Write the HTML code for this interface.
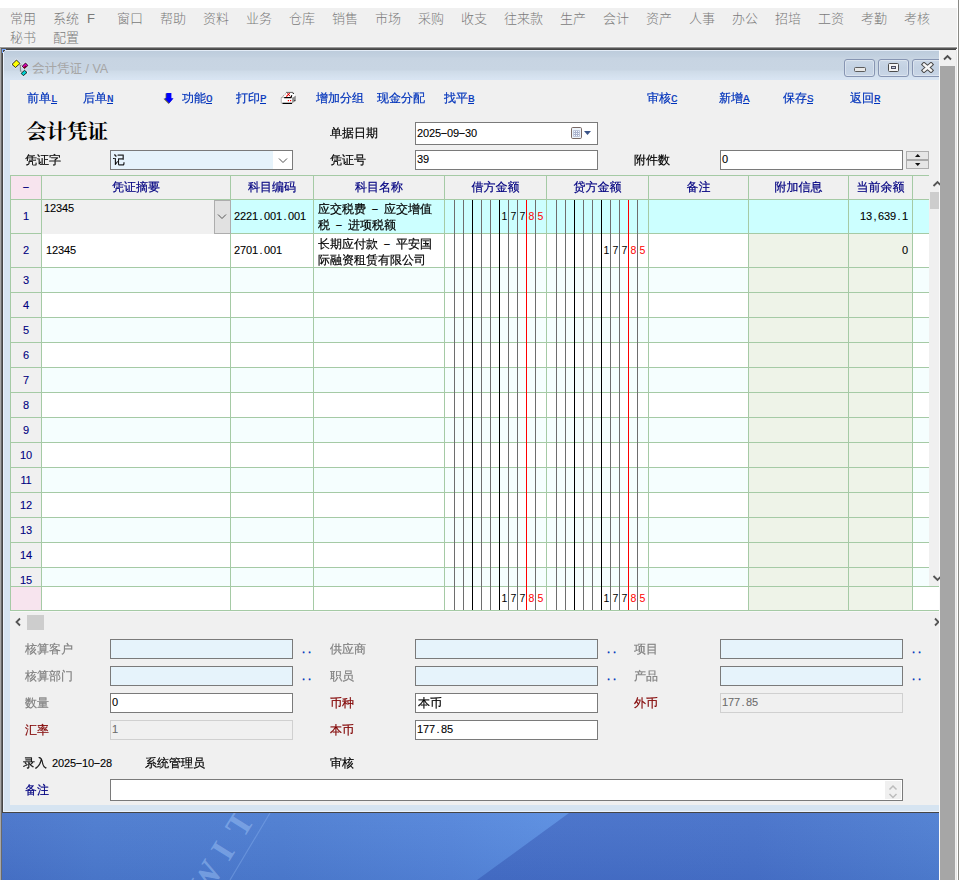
<!DOCTYPE html>
<html><head><meta charset="utf-8"><title>会计凭证 / VA</title>
<style>
html,body{margin:0;padding:0;}
body{width:959px;height:880px;position:relative;overflow:hidden;background:#fff;
 font-family:"Liberation Sans","WenQuanYi Zen Hei",sans-serif;font-size:12px;line-height:14px;color:#000;-webkit-text-stroke:0.2px;}
div,span,svg{position:absolute;box-sizing:border-box;white-space:nowrap;}
.m,u{font-family:"Liberation Sans","WenQuanYi Zen Hei",sans-serif;font-size:11px;letter-spacing:-0.12px;}
.m{-webkit-text-stroke:0.1px;}
.m i{display:inline-block;width:6px;font-style:normal;text-align:center;letter-spacing:0;}
u{font-family:"Liberation Mono",monospace;letter-spacing:-0.6px;display:inline-block;width:6px;font-size:11px;}
.menu span{-webkit-text-stroke:0;font-family:"Liberation Sans","Noto Sans CJK SC",sans-serif;font-size:13px;line-height:16px;color:#7a7a7a;font-weight:300;}
.lnk{color:#0033bb;height:14px;}
.lbl{height:14px;}
.g{color:#808080;} .r{color:#800000;} .n{color:#000080;}
.inp{border:1px solid #7a7a7a;background:#fff;}
.inp.b{background:#e6f3fb;}
.inp.d{background:#f0f0f0;border-color:#d0d0d0;color:#6d6d6d;}
.inp span{left:2px;top:2px;}
.hd{color:#000080;text-align:center;top:180px;height:14px;}
.rn{color:#000080;text-align:center;left:11px;width:30px;height:14px;}
.dots{color:#0033bb;-webkit-text-stroke:0.5px #0033bb;}
.dots i{text-align:left;}
i.w{transform:scaleX(2) translateY(-1.5px);}
.c{height:14px;}
.dg{width:9px;text-align:center;height:14px;font-family:"Liberation Sans",sans-serif;font-size:10.5px;-webkit-text-stroke:0;}
</style></head><body>

<div class="menu" style="left:0;top:8px;width:957px;height:39px;background:#f0f0f0;">
<span style="left:10px;top:3px;">常用</span>
<span style="left:53px;top:3px;">系统</span>
<span style="left:87px;top:3px;">F</span>
<span style="left:117px;top:3px;">窗口</span>
<span style="left:160px;top:3px;">帮助</span>
<span style="left:203px;top:3px;">资料</span>
<span style="left:246px;top:3px;">业务</span>
<span style="left:289px;top:3px;">仓库</span>
<span style="left:332px;top:3px;">销售</span>
<span style="left:375px;top:3px;">市场</span>
<span style="left:418px;top:3px;">采购</span>
<span style="left:461px;top:3px;">收支</span>
<span style="left:504px;top:3px;">往来款</span>
<span style="left:560px;top:3px;">生产</span>
<span style="left:603px;top:3px;">会计</span>
<span style="left:646px;top:3px;">资产</span>
<span style="left:689px;top:3px;">人事</span>
<span style="left:732px;top:3px;">办公</span>
<span style="left:775px;top:3px;">招培</span>
<span style="left:818px;top:3px;">工资</span>
<span style="left:861px;top:3px;">考勤</span>
<span style="left:904px;top:3px;">考核</span>
<span style="left:10px;top:22px;">秘书</span><span style="left:53px;top:22px;">配置</span>
</div>
<svg style="left:0;top:813px;" width="939" height="67" viewBox="0 813 939 67">
<defs>
<linearGradient id="bg1" x1="0" x2="1" y1="0" y2="0"><stop offset="0" stop-color="#4874ca"/><stop offset="0.1" stop-color="#4c7bcf"/><stop offset="0.3" stop-color="#4d7dd1"/><stop offset="0.48" stop-color="#5485da"/><stop offset="0.6" stop-color="#5a8ee1"/></linearGradient>
<linearGradient id="bg2" x1="0" x2="1" y1="0" y2="0"><stop offset="0" stop-color="#456fc8"/><stop offset="0.6" stop-color="#4772ca"/><stop offset="1" stop-color="#4f7fd2"/></linearGradient>
<linearGradient id="bg3" x1="0" x2="0" y1="0" y2="1"><stop offset="0" stop-color="#ffffff" stop-opacity="0.04"/><stop offset="1" stop-color="#000040" stop-opacity="0.05"/></linearGradient>
</defs>
<rect x="0" y="813" width="939" height="67" fill="url(#bg1)"/>
<polygon points="569,813 939,813 939,880 477,880" fill="url(#bg2)"/>
<rect x="0" y="813" width="939" height="67" fill="url(#bg3)"/>
<path d="M270 813L230 880" stroke="#86aeea" stroke-opacity="0.45" stroke-width="1.2"/>
<text transform="translate(211.8,889.5) rotate(-58)" x="-10.4 32 59.3" font-family="Liberation Serif, serif" font-weight="bold" font-size="34" fill="#93b9f0" fill-opacity="0.58">WIT</text>
</svg>
<div style="left:0;top:47px;width:1px;height:833px;background:#a8a8a8;"></div>
<div style="left:1px;top:48px;width:1px;height:832px;background:#6a6a6a;"></div>
<div style="left:2px;top:49px;width:937px;height:764px;background:#d6e4f1;"></div>
<div style="left:0;top:46px;width:957px;height:1px;background:#f7f7f7;"></div>
<div style="left:0;top:47px;width:957px;height:1px;background:#9a9a9a;"></div>
<div style="left:1px;top:48px;width:956px;height:1px;background:#565656;"></div>
<div style="left:2px;top:49px;width:954px;height:1px;background:#454545;"></div>
<div style="left:2px;top:49px;width:1px;height:764px;background:#454545;"></div>
<div style="left:3px;top:50px;width:1px;height:762px;background:#eaf1fb;"></div>
<div style="left:3px;top:50px;width:936px;height:1px;background:#e3ecf7;"></div>
<div style="left:4px;top:51px;width:935px;height:29px;background:linear-gradient(#bdccdc 0px,#c3d1e0 6px,#c7d4e2 7px,#c8d5e3 19px,#cedbe8 20px,#d8e4f2 28px);"></div>
<div style="left:3px;top:811px;width:936px;height:1px;background:#eaf1fb;"></div>
<div style="left:2px;top:812px;width:937px;height:1px;background:#454545;"></div>
<div style="left:2px;top:49px;width:4px;height:1px;background:#7aaaff;"></div><div style="left:2px;top:50px;width:2px;height:1px;background:#7aaaff;"></div><div style="left:2px;top:51px;width:1px;height:2px;background:#7aaaff;"></div><div style="left:3px;top:50px;width:2px;height:1px;background:#4a4a4a;"></div><div style="left:3px;top:51px;width:1px;height:1px;background:#4a4a4a;"></div>
<div style="left:10px;top:80px;width:929px;height:725px;background:#f0f0f0;"></div>
<svg style="left:10px;top:58px;" width="20" height="20" viewBox="10 58 20 20">
<path d="M19.5 65.2H22.5M20.4 65.2V71.3H22.5" stroke="#808080" stroke-width="1" fill="none"/>
<polygon points="16.5,60 20,63.5 15.5,67.5 12,64.4" fill="#ffff00" stroke="#fff" stroke-width="2.2" stroke-opacity="0.6"/><polygon points="16.5,60 20,63.5 15.5,67.5 12,64.4" fill="#ffff00" stroke="#101020" stroke-width="0.9"/>
<polygon points="25.5,63 27.9,65.5 24.5,68.6 22.2,66.3" fill="#e000c0" stroke="#fff" stroke-width="2.2" stroke-opacity="0.6"/><polygon points="25.5,63 27.9,65.5 24.5,68.6 22.2,66.3" fill="#e000c0" stroke="#101010" stroke-width="0.9"/><polygon points="26.7,66.6 24.5,68.6 23.3,67.4 25.6,65.4" fill="#800020"/>
<polygon points="24.5,70.3 27,72.5 23.4,75.7 21.1,73.4" fill="#00c8c8" stroke="#fff" stroke-width="2.2" stroke-opacity="0.6"/><polygon points="24.5,70.3 27,72.5 23.4,75.7 21.1,73.4" fill="#00d0d0" stroke="#101010" stroke-width="0.9"/>
</svg>
<div style="left:32px;top:61px;font-family:'Liberation Sans','Noto Sans CJK SC',sans-serif;font-size:12.5px;-webkit-text-stroke:0;line-height:16px;color:#a6a6a6;">会计凭证 / VA</div>
<div style="left:844px;top:59px;width:31px;height:18px;border:1px solid #8795b2;border-radius:3px;background:linear-gradient(#cbd8e7,#c3d1e2 50%,#c9d6e6);box-shadow:inset 0 0 0 1px rgba(255,255,255,0.35);"></div>
<div style="left:878px;top:59px;width:31px;height:18px;border:1px solid #8795b2;border-radius:3px;background:linear-gradient(#cbd8e7,#c3d1e2 50%,#c9d6e6);box-shadow:inset 0 0 0 1px rgba(255,255,255,0.35);"></div>
<div style="left:912px;top:59px;width:31px;height:18px;border:1px solid #8795b2;border-radius:3px;background:linear-gradient(#cbd8e7,#c3d1e2 50%,#c9d6e6);box-shadow:inset 0 0 0 1px rgba(255,255,255,0.35);"></div>
<div style="left:854px;top:67px;width:12px;height:5px;border:1px solid #5c5c5c;border-radius:1.5px;background:#e8e8e8;"></div>
<div style="left:888px;top:63px;width:11px;height:9px;border:1px solid #4c4c4c;border-radius:1.5px;background:#f4f4f4;"></div>
<div style="left:891px;top:66px;width:5px;height:3px;border:1px solid #4c4c5c;background:#c8d0e0;"></div>
<svg style="left:921px;top:62px;" width="13" height="11" viewBox="0 0 13 11"><path d="M3 2.5L10 8.5M10 2.5L3 8.5" stroke="#4a4a4a" stroke-width="4.4" stroke-linecap="square"/><path d="M3 2.5L10 8.5M10 2.5L3 8.5" stroke="#f6f6f6" stroke-width="2.4" stroke-linecap="square"/></svg>
<div style="left:939px;top:50px;width:18px;height:830px;background:#f0f0f0;"></div>
<div style="left:939px;top:50px;width:1px;height:830px;background:#fafafa;"></div>
<div style="left:940px;top:66px;width:15px;height:814px;background:#a6a6a6;"></div>
<svg style="left:943px;top:54px;" width="9" height="7" viewBox="0 0 9 7"><path d="M1 5.5L4.5 2L8 5.5" stroke="#505050" stroke-width="1.8" fill="none"/></svg>
<div style="left:955px;top:50px;width:2px;height:830px;background:linear-gradient(90deg,#f0f0f0 50%,#e6e6e6 50%);"></div>
<div style="left:957px;top:0;width:1px;height:880px;background:#fff;"></div>
<div style="left:958px;top:0;width:1px;height:880px;background:#8a8a86;"></div>
<div class="lnk" style="left:27px;top:91px;">前单<u>L</u></div>
<div class="lnk" style="left:83px;top:91px;">后单<u>N</u></div>
<div class="lnk" style="left:182px;top:91px;">功能<u>O</u></div>
<div class="lnk" style="left:236px;top:91px;">打印<u>P</u></div>
<div class="lnk" style="left:316px;top:91px;">增加分组</div>
<div class="lnk" style="left:377px;top:91px;">现金分配</div>
<div class="lnk" style="left:444px;top:91px;">找平<u>B</u></div>
<div class="lnk" style="left:647px;top:91px;">审核<u>C</u></div>
<div class="lnk" style="left:719px;top:91px;">新增<u>A</u></div>
<div class="lnk" style="left:783px;top:91px;">保存<u>S</u></div>
<div class="lnk" style="left:850px;top:91px;">返回<u>R</u></div>
<svg style="left:162px;top:91px;" width="14" height="14" viewBox="162 91 14 14">
<polygon points="165.6,93.6 170.6,93.6 170.6,98.8 172.8,98.8 168.6,103.9 163.4,98.8 165.6,98.8" fill="#6b6b3a"/>
<polygon points="166.4,93 171.4,93 171.4,98.2 173.6,98.2 169.3,103.2 164.2,98.2 166.4,98.2" fill="#0000ff"/>
</svg>
<svg style="left:280px;top:90px;" width="17" height="15" viewBox="280 90 17 15">
<polygon points="281.3,98 286,92.6 293.2,92.6 295.8,95.6 292.3,98" fill="#fff"/>
<path d="M286 92.4H293" stroke="#555" stroke-width="0.9"/>
<path d="M281.6 97.6L285.8 93.6" stroke="#707070" stroke-width="1" stroke-dasharray="1.3 0.9"/>
<path d="M281.4 97.6V102.6" stroke="#9a9a9a" stroke-width="0.9"/>
<rect x="281.2" y="97.7" width="11.1" height="5.4" fill="#fff" stroke="#a0a0a0" stroke-width="0.6"/>
<polygon points="292.3,98 295.8,95.6 295.8,100.6 292.3,103.2" fill="#8e8e8e"/>
<path d="M282.5 103.4H292" stroke="#000" stroke-width="1.2"/>
<path d="M284.2 97.6H291L291.8 95.3" stroke="#000" stroke-width="1.1" fill="none"/>
<path d="M286.3 96.7L289.7 93.2" stroke="#ff0000" stroke-width="1.1"/>
<path d="M287.3 93.3L290.3 96.4" stroke="#a00000" stroke-width="0.9"/>
<rect x="287.8" y="100" width="1.2" height="1.2" fill="#ff0000"/><rect x="290" y="100" width="1.2" height="1.2" fill="#ff0000"/>
<rect x="292.8" y="92.8" width="1" height="1.2" fill="#000"/><rect x="294.3" y="100" width="1" height="1.2" fill="#222"/>
</svg>
<div style="left:26px;top:120px;font-family:'Liberation Serif','Noto Serif CJK SC',serif;font-weight:700;font-size:20.5px;-webkit-text-stroke:0;line-height:24px;">会计凭证</div>
<div class="lbl " style="left:330px;top:126px;">单据日期</div>
<div class="lbl " style="left:25px;top:153px;">凭证字</div>
<div class="lbl " style="left:330px;top:153px;">凭证号</div>
<div class="lbl " style="left:634px;top:153px;">附件数</div>
<div class="inp " style="left:415px;top:122px;width:183px;height:23px;"><span class="m" style="top:3px;left:1px">2025<i class="w">-</i>09<i class="w">-</i>30</span></div>
<div class="inp b" style="left:110px;top:150px;width:183px;height:20px;"><span style="top:2px">记</span></div>
<div class="inp " style="left:415px;top:150px;width:183px;height:20px;"><span class="m" style="top:1px;left:1px">39</span></div>
<div class="inp " style="left:720px;top:150px;width:183px;height:20px;"><span class="m" style="top:1px;left:1px">0</span></div>
<div style="left:273px;top:151px;width:19px;height:18px;background:#fff;"></div>
<svg style="left:278px;top:157px;" width="10" height="7" viewBox="0 0 10 7"><path d="M1 1.5L5 5.5L9 1.5" stroke="#505050" stroke-width="1" fill="none"/></svg>
<svg style="left:570px;top:126px;" width="22" height="14" viewBox="570 126 22 14">
<rect x="571.5" y="127.5" width="10" height="11" rx="1.2" fill="#eef4fb" stroke="#7a6a66" stroke-width="1"/>
<rect x="573.3" y="130.3" width="6.4" height="6.4" fill="#aab2cc"/>
<g fill="#f4f8ff"><rect x="574" y="131" width="1" height="1"/><rect x="576" y="131" width="1" height="1"/><rect x="578" y="131" width="1" height="1"/><rect x="574" y="133" width="1" height="1"/><rect x="576" y="133" width="1" height="1"/><rect x="578" y="133" width="1" height="1"/><rect x="574" y="135" width="1" height="1"/><rect x="576" y="135" width="1" height="1"/><rect x="578" y="135" width="1" height="1"/></g>
<polygon points="584,131 591,131 587.5,135" fill="#3b5488"/>
</svg>
<div style="left:906px;top:151px;width:23px;height:18px;background:#a8a8a8;border:1px solid #adadad;"></div>
<div style="left:907px;top:152px;width:21px;height:7px;background:#e6e6e6;"></div>
<div style="left:907px;top:161px;width:21px;height:7px;background:#e6e6e6;"></div>
<svg style="left:914px;top:153px;" width="8" height="14" viewBox="0 0 8 14"><polygon points="1,4 6.4,4 3.7,1" fill="#111"/><polygon points="1,10 6.4,10 3.7,13" fill="#111"/></svg>
<div style="left:10px;top:175px;width:919px;height:436px;background:#fff;"></div>
<div style="left:929px;top:586px;width:10px;height:25px;background:#fff;"></div>
<div style="left:10px;top:175px;width:919px;height:25px;background:#f0f0f0;"></div>
<div style="left:10px;top:175px;width:31px;height:25px;background:#f7e4ee;"></div>
<div style="left:10px;top:200px;width:31px;height:387px;background:#f0f0f0;"></div>
<div style="left:10px;top:587px;width:31px;height:24px;background:#f7e4ee;"></div>
<div style="left:42px;top:200px;width:887px;height:34px;background:#ccffff;"></div>
<div style="left:42px;top:200px;width:189px;height:34px;background:#f0f0f0;"></div>
<div style="left:42px;top:268px;width:887px;height:25px;background:#f5fefe;"></div>
<div style="left:42px;top:318px;width:887px;height:25px;background:#f5fefe;"></div>
<div style="left:42px;top:368px;width:887px;height:25px;background:#f5fefe;"></div>
<div style="left:42px;top:418px;width:887px;height:25px;background:#f5fefe;"></div>
<div style="left:42px;top:468px;width:887px;height:25px;background:#f5fefe;"></div>
<div style="left:42px;top:518px;width:887px;height:25px;background:#f5fefe;"></div>
<div style="left:42px;top:568px;width:887px;height:19px;background:#f5fefe;"></div>
<div style="left:749px;top:234px;width:163px;height:377px;background:#eef3e8;"></div>
<div style="left:10px;top:175px;width:919px;height:1px;background:#a5caa5;"></div>
<div style="left:10px;top:199px;width:919px;height:1px;background:#a5caa5;"></div>
<div style="left:10px;top:233px;width:919px;height:1px;background:#a5caa5;"></div>
<div style="left:10px;top:267px;width:919px;height:1px;background:#a5caa5;"></div>
<div style="left:10px;top:292px;width:919px;height:1px;background:#a5caa5;"></div>
<div style="left:10px;top:317px;width:919px;height:1px;background:#a5caa5;"></div>
<div style="left:10px;top:342px;width:919px;height:1px;background:#a5caa5;"></div>
<div style="left:10px;top:367px;width:919px;height:1px;background:#a5caa5;"></div>
<div style="left:10px;top:392px;width:919px;height:1px;background:#a5caa5;"></div>
<div style="left:10px;top:417px;width:919px;height:1px;background:#a5caa5;"></div>
<div style="left:10px;top:442px;width:919px;height:1px;background:#a5caa5;"></div>
<div style="left:10px;top:467px;width:919px;height:1px;background:#a5caa5;"></div>
<div style="left:10px;top:492px;width:919px;height:1px;background:#a5caa5;"></div>
<div style="left:10px;top:517px;width:919px;height:1px;background:#a5caa5;"></div>
<div style="left:10px;top:542px;width:919px;height:1px;background:#a5caa5;"></div>
<div style="left:10px;top:567px;width:919px;height:1px;background:#a5caa5;"></div>
<div style="left:10px;top:586px;width:929px;height:1px;background:#a5caa5;"></div>
<div style="left:10px;top:610px;width:929px;height:1px;background:#a5caa5;"></div>
<div style="left:10px;top:175px;width:1px;height:436px;background:#a5caa5;"></div>
<div style="left:41px;top:175px;width:1px;height:436px;background:#a5caa5;"></div>
<div style="left:230px;top:175px;width:1px;height:436px;background:#a5caa5;"></div>
<div style="left:313px;top:175px;width:1px;height:436px;background:#a5caa5;"></div>
<div style="left:444px;top:175px;width:1px;height:436px;background:#a5caa5;"></div>
<div style="left:546px;top:175px;width:1px;height:436px;background:#a5caa5;"></div>
<div style="left:648px;top:175px;width:1px;height:436px;background:#a5caa5;"></div>
<div style="left:748px;top:175px;width:1px;height:436px;background:#a5caa5;"></div>
<div style="left:848px;top:175px;width:1px;height:436px;background:#a5caa5;"></div>
<div style="left:912px;top:175px;width:1px;height:436px;background:#a5caa5;"></div>
<div style="left:454px;top:200px;width:1px;height:410px;background:#6e6e6e;"></div>
<div style="left:463px;top:200px;width:1px;height:410px;background:#6e6e6e;"></div>
<div style="left:472px;top:200px;width:1px;height:410px;background:#000;"></div>
<div style="left:481px;top:200px;width:1px;height:410px;background:#6e6e6e;"></div>
<div style="left:490px;top:200px;width:1px;height:410px;background:#6e6e6e;"></div>
<div style="left:499px;top:200px;width:1px;height:410px;background:#000;"></div>
<div style="left:508px;top:200px;width:1px;height:410px;background:#6e6e6e;"></div>
<div style="left:517px;top:200px;width:1px;height:410px;background:#6e6e6e;"></div>
<div style="left:526px;top:200px;width:1px;height:410px;background:#ff0000;"></div>
<div style="left:535px;top:200px;width:1px;height:410px;background:#6e6e6e;"></div>
<div style="left:556px;top:200px;width:1px;height:410px;background:#6e6e6e;"></div>
<div style="left:565px;top:200px;width:1px;height:410px;background:#6e6e6e;"></div>
<div style="left:574px;top:200px;width:1px;height:410px;background:#000;"></div>
<div style="left:583px;top:200px;width:1px;height:410px;background:#6e6e6e;"></div>
<div style="left:592px;top:200px;width:1px;height:410px;background:#6e6e6e;"></div>
<div style="left:601px;top:200px;width:1px;height:410px;background:#000;"></div>
<div style="left:610px;top:200px;width:1px;height:410px;background:#6e6e6e;"></div>
<div style="left:619px;top:200px;width:1px;height:410px;background:#6e6e6e;"></div>
<div style="left:628px;top:200px;width:1px;height:410px;background:#ff0000;"></div>
<div style="left:637px;top:200px;width:1px;height:410px;background:#6e6e6e;"></div>
<div style="left:42px;top:200px;width:172px;height:34px;background:#f0f0f0;"></div>
<div style="left:214px;top:200px;width:17px;height:34px;background:#e1e1e1;border:1px solid #adadad;"></div>
<svg style="left:217px;top:213px;" width="10" height="8" viewBox="0 0 10 8"><path d="M1 1.5L5 5.5L9 1.5" stroke="#555" stroke-width="1" fill="none"/></svg>
<div class="hd" style="left:11px;width:30px;"><span class="m" style="position:static"><i class="w">-</i></span></div>
<div class="hd" style="left:42px;width:188px;">凭证摘要</div>
<div class="hd" style="left:231px;width:82px;">科目编码</div>
<div class="hd" style="left:314px;width:130px;">科目名称</div>
<div class="hd" style="left:445px;width:101px;">借方金额</div>
<div class="hd" style="left:547px;width:101px;">贷方金额</div>
<div class="hd" style="left:649px;width:99px;">备注</div>
<div class="hd" style="left:749px;width:99px;">附加信息</div>
<div class="hd" style="left:849px;width:63px;">当前余额</div>
<div class="rn m" style="top:209px;">1</div>
<div class="rn m" style="top:243px;">2</div>
<div class="rn m" style="top:273px;">3</div>
<div class="rn m" style="top:298px;">4</div>
<div class="rn m" style="top:323px;">5</div>
<div class="rn m" style="top:348px;">6</div>
<div class="rn m" style="top:373px;">7</div>
<div class="rn m" style="top:398px;">8</div>
<div class="rn m" style="top:423px;">9</div>
<div class="rn m" style="top:448px;">10</div>
<div class="rn m" style="top:473px;">11</div>
<div class="rn m" style="top:498px;">12</div>
<div class="rn m" style="top:523px;">13</div>
<div class="rn m" style="top:548px;">14</div>
<div class="rn m" style="top:573px;">15</div>
<div class="c m" style="left:44px;top:201px;">12345</div>
<div class="c m" style="left:46px;top:243px;">12345</div>
<div class="c m" style="left:234px;top:209px;">2221<i>.</i>001<i>.</i>001</div>
<div class="c m" style="left:234px;top:243px;">2701<i>.</i>001</div>
<div style="left:318px;top:201px;line-height:16px;">应交税费<span class="m" style="position:static"><i> </i><i class="w">-</i><i> </i></span>应交增值<br>税<span class="m" style="position:static"><i> </i><i class="w">-</i><i> </i></span>进项税额</div>
<div style="left:318px;top:236px;line-height:16px;">长期应付款<span class="m" style="position:static"><i> </i><i class="w">-</i><i> </i></span>平安国<br>际融资租赁有限公司</div>
<div class="c m" style="left:812px;width:96px;text-align:right;top:209px;">13<i>,</i>639<i>.</i>1</div>
<div class="c m" style="left:812px;width:96px;text-align:right;top:243px;">0</div>
<div class="dg" style="left:500px;top:209px;color:#000;">1</div>
<div class="dg" style="left:509px;top:209px;color:#000;">7</div>
<div class="dg" style="left:518px;top:209px;color:#000;">7</div>
<div class="dg" style="left:527px;top:209px;color:#ff0000;">8</div>
<div class="dg" style="left:536px;top:209px;color:#ff0000;">5</div>
<div class="dg" style="left:602px;top:243px;color:#000;">1</div>
<div class="dg" style="left:611px;top:243px;color:#000;">7</div>
<div class="dg" style="left:620px;top:243px;color:#000;">7</div>
<div class="dg" style="left:629px;top:243px;color:#ff0000;">8</div>
<div class="dg" style="left:638px;top:243px;color:#ff0000;">5</div>
<div class="dg" style="left:500px;top:591px;color:#000;">1</div>
<div class="dg" style="left:509px;top:591px;color:#000;">7</div>
<div class="dg" style="left:518px;top:591px;color:#000;">7</div>
<div class="dg" style="left:527px;top:591px;color:#ff0000;">8</div>
<div class="dg" style="left:536px;top:591px;color:#ff0000;">5</div>
<div class="dg" style="left:602px;top:591px;color:#000;">1</div>
<div class="dg" style="left:611px;top:591px;color:#000;">7</div>
<div class="dg" style="left:620px;top:591px;color:#000;">7</div>
<div class="dg" style="left:629px;top:591px;color:#ff0000;">8</div>
<div class="dg" style="left:638px;top:591px;color:#ff0000;">5</div>
<div style="left:10px;top:611px;width:929px;height:1px;background:#f8f8f8;"></div>
<div style="left:929px;top:175px;width:10px;height:411px;background:#f0f0f0;"></div>
<div style="left:930px;top:192px;width:9px;height:17px;background:#cdcdcd;"></div>
<svg style="left:932px;top:180px;" width="8" height="8" viewBox="0 0 8 8"><path d="M1.5 6L5.5 2L9 5.5" stroke="#555" stroke-width="1.8" fill="none"/></svg>
<svg style="left:932px;top:574px;" width="8" height="8" viewBox="0 0 8 8"><path d="M1.5 2L5.5 6L9 2.5" stroke="#555" stroke-width="1.8" fill="none"/></svg>
<div style="left:27px;top:615px;width:17px;height:15px;background:#cdcdcd;"></div>
<svg style="left:14px;top:617px;" width="8" height="10" viewBox="0 0 8 10"><path d="M6 1.5L2.5 5L6 8.5" stroke="#555" stroke-width="1.8" fill="none"/></svg>
<svg style="left:933px;top:617px;" width="6" height="10" viewBox="0 0 6 10"><path d="M2 1.5L5.5 5L2 8.5" stroke="#555" stroke-width="1.8" fill="none"/></svg>
<div class="lbl g" style="left:25px;top:642px;">核算客户</div>
<div class="lbl g" style="left:25px;top:669px;">核算部门</div>
<div class="lbl g" style="left:25px;top:696px;">数量</div>
<div class="lbl r" style="left:25px;top:723px;">汇率</div>
<div class="lbl g" style="left:330px;top:642px;">供应商</div>
<div class="lbl g" style="left:330px;top:669px;">职员</div>
<div class="lbl r" style="left:330px;top:696px;">币种</div>
<div class="lbl r" style="left:330px;top:723px;">本币</div>
<div class="lbl g" style="left:634px;top:642px;">项目</div>
<div class="lbl g" style="left:634px;top:669px;">产品</div>
<div class="lbl r" style="left:634px;top:696px;">外币</div>
<div class="inp b" style="left:110px;top:639px;width:183px;height:20px;"></div>
<div class="inp b" style="left:110px;top:666px;width:183px;height:20px;"></div>
<div class="inp " style="left:110px;top:693px;width:183px;height:20px;"><span class="m" style="top:1px;left:1px">0</span></div>
<div class="inp d" style="left:110px;top:720px;width:183px;height:20px;"><span class="m" style="top:1px;left:1px">1</span></div>
<div class="inp b" style="left:415px;top:639px;width:183px;height:20px;"></div>
<div class="inp b" style="left:415px;top:666px;width:183px;height:20px;"></div>
<div class="inp " style="left:415px;top:693px;width:183px;height:20px;"><span style="top:2px">本币</span></div>
<div class="inp " style="left:415px;top:720px;width:183px;height:20px;"><span class="m" style="top:1px;left:1px">177<i>.</i>85</span></div>
<div class="inp b" style="left:720px;top:639px;width:183px;height:20px;"></div>
<div class="inp b" style="left:720px;top:666px;width:183px;height:20px;"></div>
<div class="inp d" style="left:720px;top:693px;width:183px;height:20px;"><span class="m" style="top:1px;left:1px">177<i>.</i>85</span></div>
<div class="dots m" style="left:302px;top:642px;"><i>.</i><i>.</i></div>
<div class="dots m" style="left:302px;top:669px;"><i>.</i><i>.</i></div>
<div class="dots m" style="left:607px;top:642px;"><i>.</i><i>.</i></div>
<div class="dots m" style="left:607px;top:669px;"><i>.</i><i>.</i></div>
<div class="dots m" style="left:912px;top:642px;"><i>.</i><i>.</i></div>
<div class="dots m" style="left:912px;top:669px;"><i>.</i><i>.</i></div>
<div class="lbl " style="left:23px;top:756px;">录入</div>
<div class="lbl m" style="left:52px;top:756px;">2025<i class="w">-</i>10<i class="w">-</i>28</div>
<div class="lbl " style="left:145px;top:756px;">系统管理员</div>
<div class="lbl " style="left:330px;top:756px;">审核</div>
<div class="lbl n" style="left:25px;top:783px;">备注</div>
<div class="inp " style="left:110px;top:779px;width:793px;height:22px;"></div>
<div style="left:885px;top:781px;width:16px;height:18px;background:#f0f0f0;"></div>
<svg style="left:888px;top:783px;" width="10" height="17" viewBox="0 0 10 17"><path d="M1.5 6.5L5 3L8.5 6.5M1.5 11L5 14.5L8.5 11" stroke="#bcbcbc" stroke-width="1.5" fill="none"/></svg>
</body></html>
